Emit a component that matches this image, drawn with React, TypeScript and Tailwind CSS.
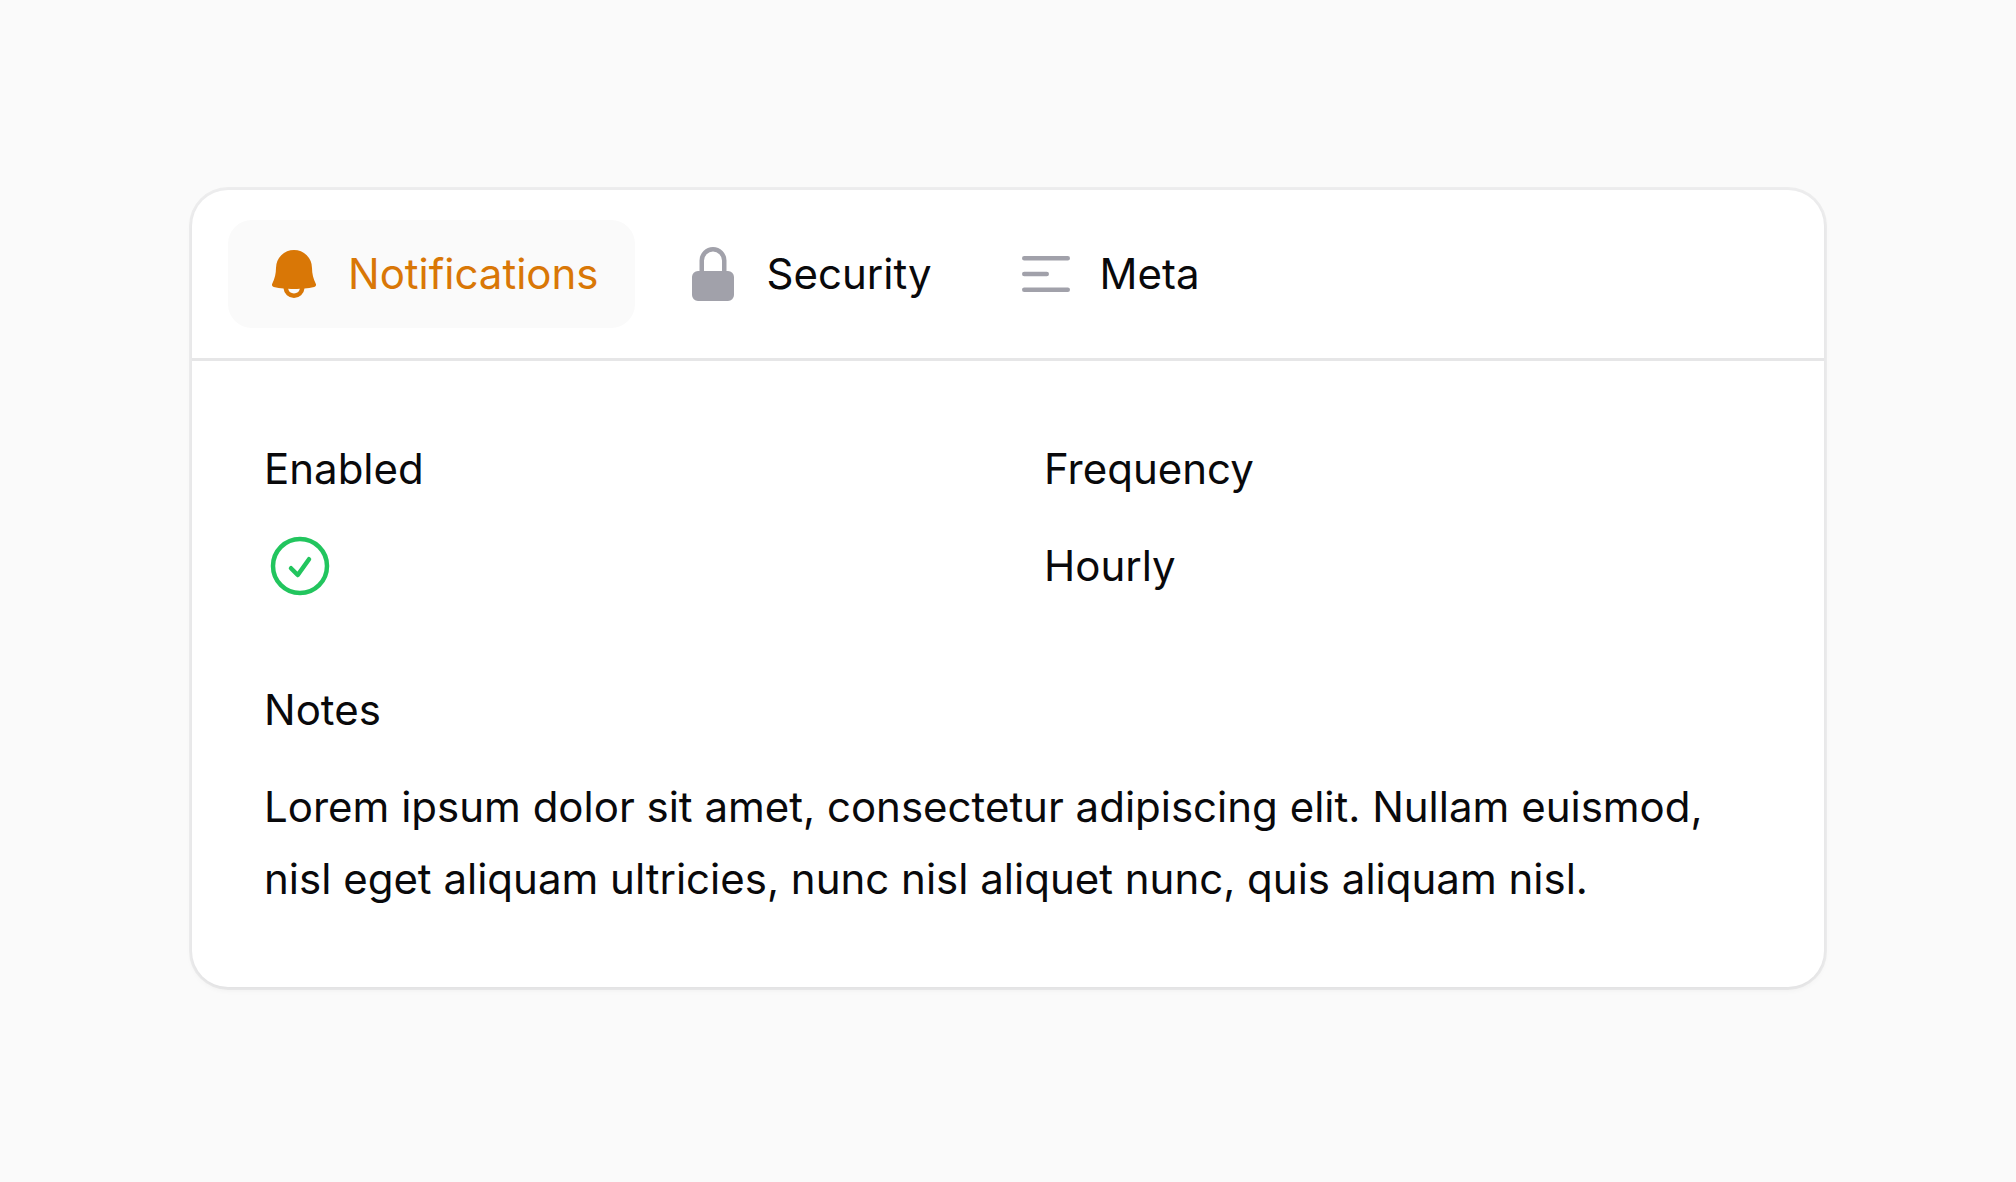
import { useState } from "react";
import type { ReactNode } from "react";

function MiniIcon({ children }: { children: ReactNode }) {
  return (
    <svg viewBox="0 0 20 20" fill="currentColor" aria-hidden="true" className="size-[60px] shrink-0">
      {children}
    </svg>
  );
}

const tabs = [
  {
    label: "Notifications",
    icon: (
      <path
        fillRule="evenodd"
        clipRule="evenodd"
        d="M4 8a6 6 0 1 1 12 0c0 1.887.454 3.665 1.257 5.234a.75.75 0 0 1-.515 1.076 32.91 32.91 0 0 1-3.256.508 3.5 3.5 0 0 1-6.972 0 32.903 32.903 0 0 1-3.256-.508.75.75 0 0 1-.515-1.076A11.448 11.448 0 0 0 4 8Zm6 7c-.655 0-1.305-.02-1.95-.057a2 2 0 0 0 3.9 0c-.645.038-1.295.057-1.95.057Z"
      />
    ),
  },
  {
    label: "Security",
    icon: (
      <path
        fillRule="evenodd"
        clipRule="evenodd"
        d="M10 1a4.5 4.5 0 0 0-4.5 4.5V9H5a2 2 0 0 0-2 2v6a2 2 0 0 0 2 2h10a2 2 0 0 0 2-2v-6a2 2 0 0 0-2-2h-.5V5.5A4.5 4.5 0 0 0 10 1Zm3 8V5.5a3 3 0 1 0-6 0V9h6Z"
      />
    ),
  },
  {
    label: "Meta",
    icon: (
      <path
        fillRule="evenodd"
        clipRule="evenodd"
        d="M2 4.75A.75.75 0 0 1 2.75 4h14.5a.75.75 0 0 1 0 1.5H2.75A.75.75 0 0 1 2 4.75Zm0 10.5a.75.75 0 0 1 .75-.75h14.5a.75.75 0 0 1 0 1.5H2.75a.75.75 0 0 1-.75-.75ZM2 10a.75.75 0 0 1 .75-.75h7.5a.75.75 0 0 1 0 1.5h-7.5A.75.75 0 0 1 2 10Z"
      />
    ),
  },
];

function Entry({ label, wide = false, children }: { label: string; wide?: boolean; children: ReactNode }) {
  return (
    <div className={wide ? "col-span-2 grid gap-[25px]" : "grid gap-[25px]"}>
      <dt>{label}</dt>
      <dd>{children}</dd>
    </div>
  );
}

export default function App() {
  const [active, setActive] = useState("Notifications");

  return (
    <main className="min-h-screen bg-[#fafafa] px-48 pt-[190px] pb-48 font-['Inter',sans-serif] text-[42px] leading-[72px] font-normal text-[#09090b] [font-optical-sizing:none]">
      <section className="rounded-[36px] bg-white shadow-[0_0_0_3px_rgba(9,9,11,0.05),0_3px_6px_rgba(0,0,0,0.05)]">
        <div role="tablist" aria-label="Sections" className="flex gap-3 border-b-3 border-[#e6e6e7] px-9 py-[30px]">
          {tabs.map(({ label, icon }) => (
            <button
              key={label}
              type="button"
              role="tab"
              aria-selected={active === label}
              onClick={() => setActive(label)}
              className={
                active === label
                  ? "flex items-center gap-6 rounded-3xl bg-[#fafafa] px-9 py-6 leading-[60px] text-[#d97706]"
                  : "flex items-center gap-6 rounded-3xl px-9 py-6 leading-[60px]"
              }
            >
              <span className={active === label ? "text-[#d97706]" : "text-[#a1a1aa]"}>
                <MiniIcon>{icon}</MiniIcon>
              </span>
              {label}
            </button>
          ))}
        </div>
        <dl role="tabpanel" aria-label={active} className="grid grid-cols-2 gap-[72px] p-[72px]">
          <Entry label="Enabled">
            <svg
              viewBox="0 0 24 24"
              fill="none"
              stroke="currentColor"
              strokeWidth="1.5"
              strokeLinecap="round"
              strokeLinejoin="round"
              role="img"
              aria-label="Yes"
              className="size-[72px] text-[#22c55e]"
            >
              <path d="M9 12.75 11.25 15 15 9.75M21 12a9 9 0 1 1-18 0 9 9 0 0 1 18 0Z" />
            </svg>
          </Entry>
          <Entry label="Frequency">Hourly</Entry>
          <Entry label="Notes" wide>
            Lorem ipsum dolor sit amet, consectetur adipiscing elit. Nullam euismod, nisl eget aliquam ultricies, nunc
            nisl aliquet nunc, quis aliquam nisl.
          </Entry>
        </dl>
      </section>
    </main>
  );
}
